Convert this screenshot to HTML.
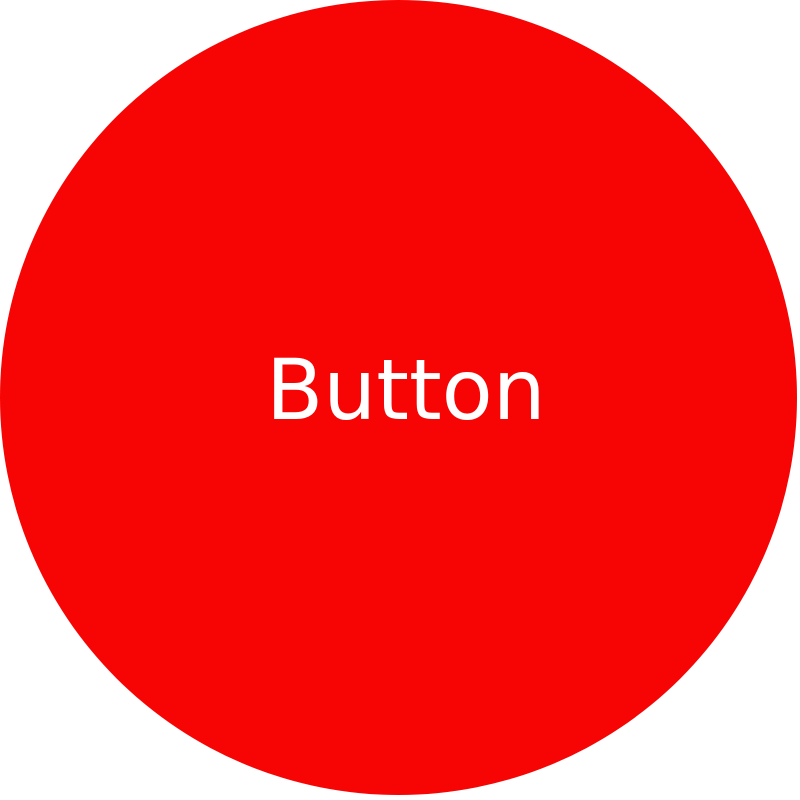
<!DOCTYPE html>
<html><head><style>
html,body{margin:0;padding:0;background:#fff;width:800px;height:800px;overflow:hidden}
.c{position:absolute;left:0;top:0;width:797px;height:795px;border-radius:50%;background:#f70505}
.t{position:absolute;left:266px;top:340px;font-family:"DejaVu Sans",sans-serif;font-size:83.5px;color:#fff;line-height:100px;white-space:nowrap}
</style></head><body>
<div class="c"></div>
<div class="t">Button</div>
</body></html>
